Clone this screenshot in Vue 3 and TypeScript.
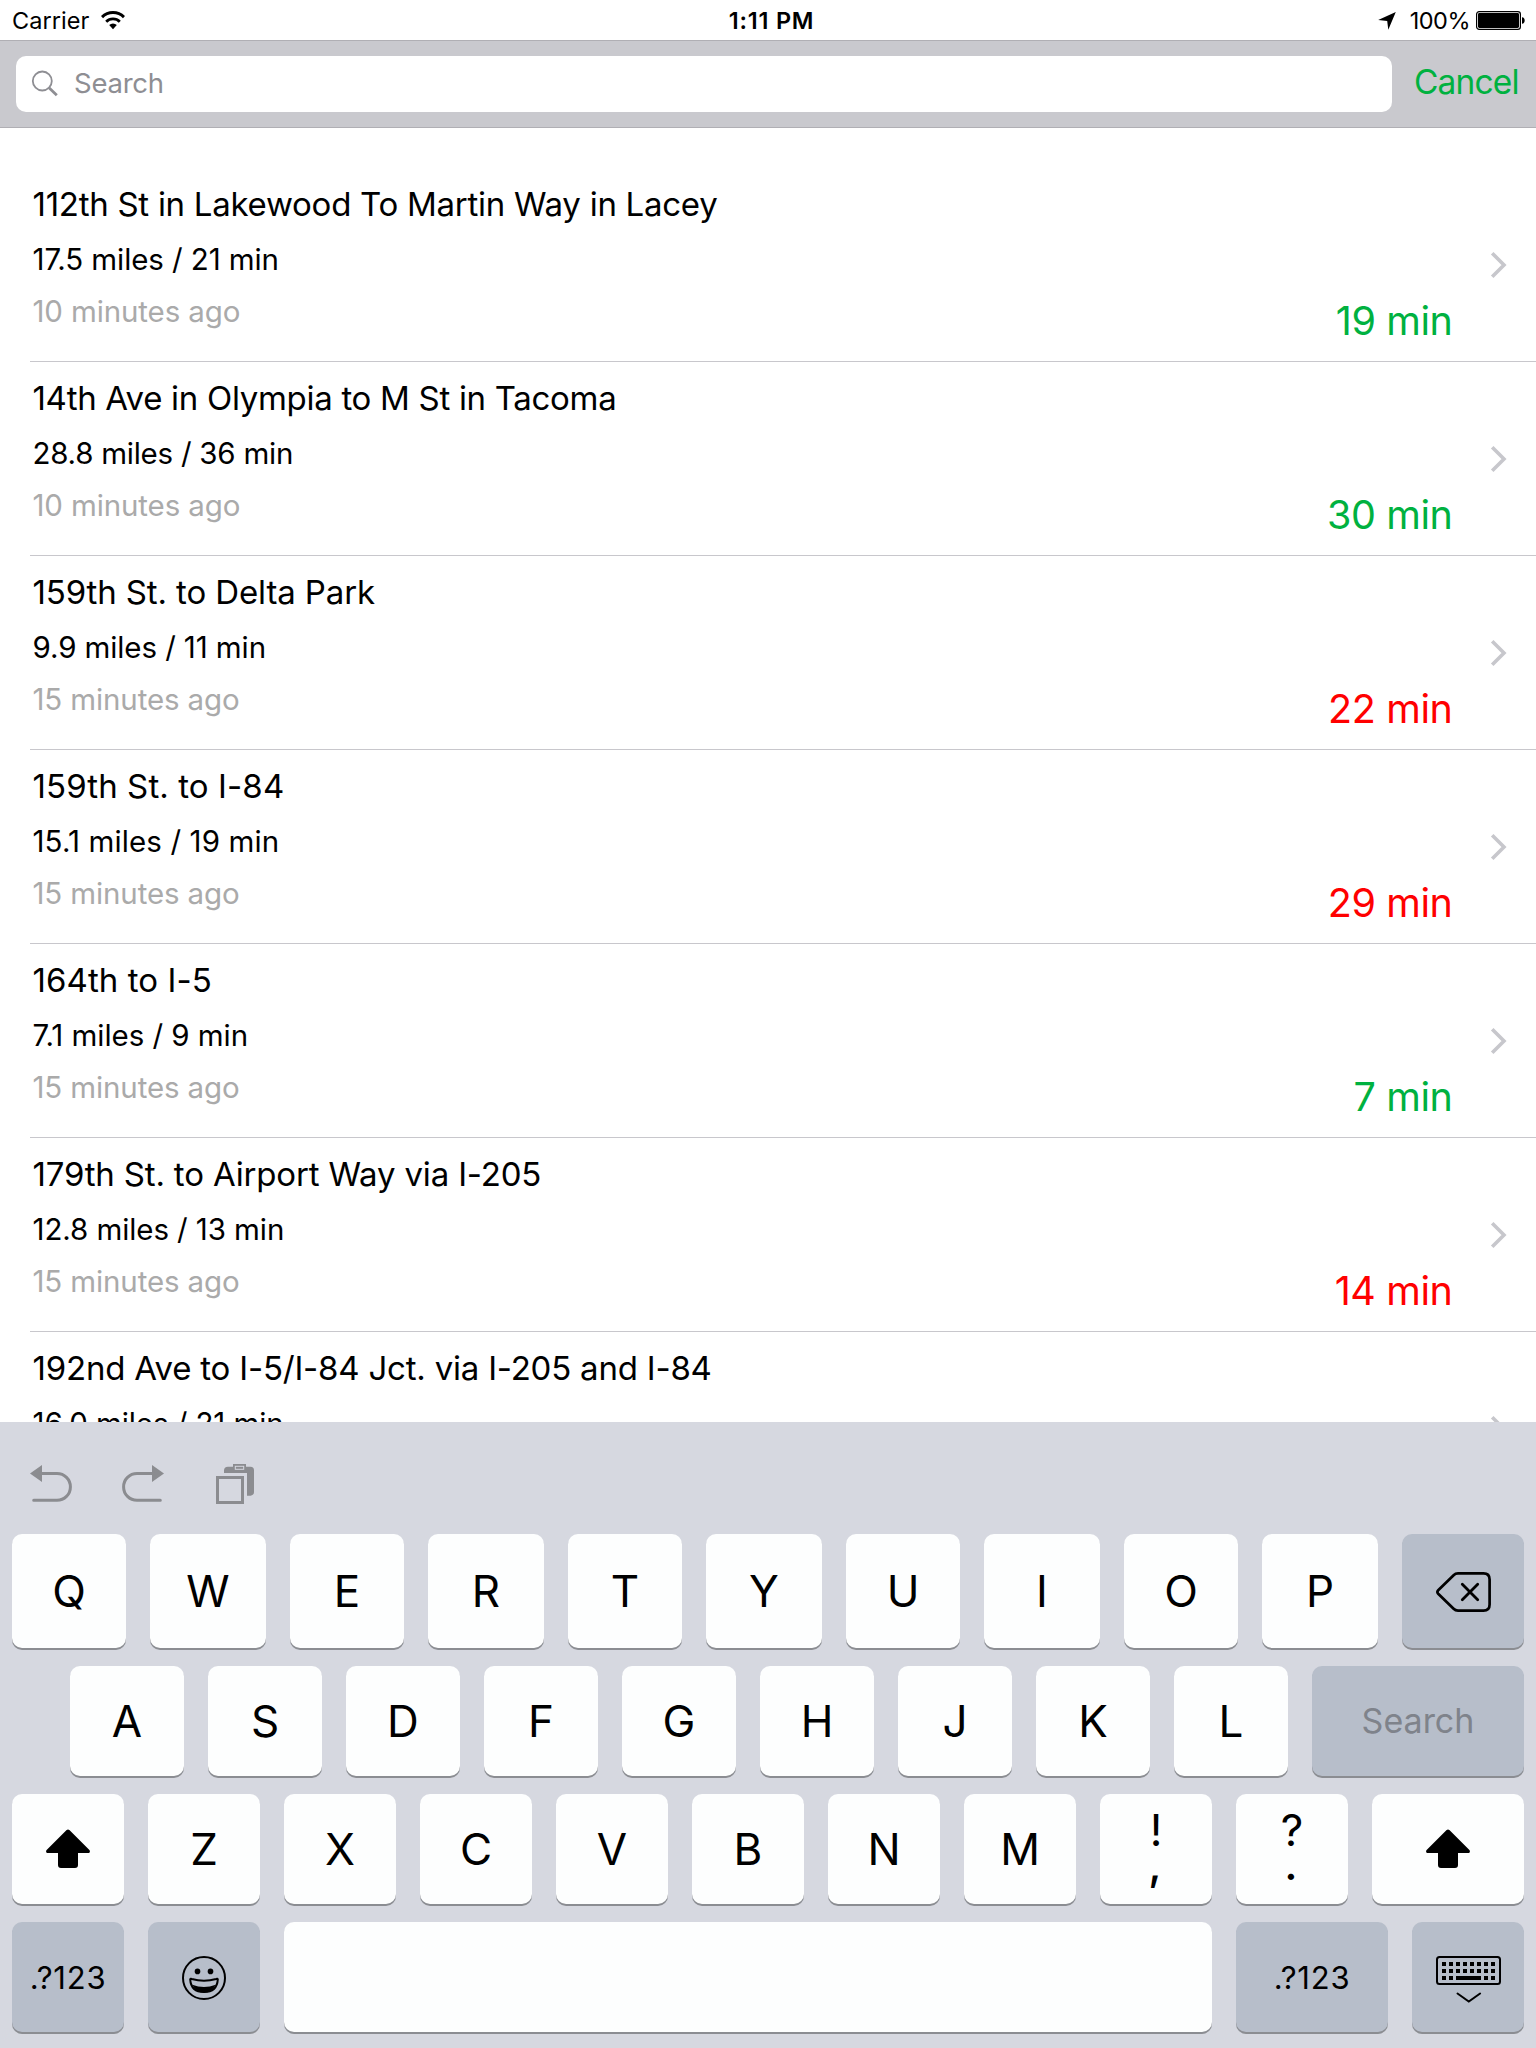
<script setup lang="ts">
interface Trip {
  name: string
  nameTracking: number
  detail: string
  detailTracking: number
  ago?: string
  time?: string
  slow?: boolean
}

interface Key {
  label?: string
  lower?: string
  icon?: 'delete' | 'shift' | 'emoji' | 'hide'
  kind?: 'letter' | 'small' | 'search'
  dark?: boolean
  width: number
}

const trips: Trip[] = [
  { name: '112th St in Lakewood To Martin Way in Lacey', nameTracking: -0.27, detail: '17.5 miles / 21 min', detailTracking: -0.09, ago: '10 minutes ago', time: '19 min' },
  { name: '14th Ave in Olympia to M St in Tacoma', nameTracking: -0.3, detail: '28.8 miles / 36 min', detailTracking: -0.25, ago: '10 minutes ago', time: '30 min' },
  { name: '159th St. to Delta Park', nameTracking: -0.12, detail: '9.9 miles / 11 min', detailTracking: -0.1, ago: '15 minutes ago', time: '22 min', slow: true },
  { name: '159th St. to I-84', nameTracking: 0.1, detail: '15.1 miles / 19 min', detailTracking: 0.12, ago: '15 minutes ago', time: '29 min', slow: true },
  { name: '164th to I-5', nameTracking: 0.07, detail: '7.1 miles / 9 min', detailTracking: -0.05, ago: '15 minutes ago', time: '7 min' },
  { name: '179th St. to Airport Way via I-205', nameTracking: -0.17, detail: '12.8 miles / 13 min', detailTracking: -0.09, ago: '15 minutes ago', time: '14 min', slow: true },
  { name: '192nd Ave to I-5/I-84 Jct. via I-205 and I-84', nameTracking: -0.21, detail: '16.0 miles / 21 min', detailTracking: -0.09 },
]

const letters = (text: string, width: (i: number) => number): Key[] =>
  text.split('').map((label, i) => ({ label, kind: 'letter', width: width(i) }))

const rows: Key[][] = [
  [...letters('QWERTYUIOP', (i) => (i % 2 ? 116 : 114)), { icon: 'delete', dark: true, width: 122 }],
  [...letters('ASDFGHJKL', () => 114), { label: 'Search', kind: 'search', dark: true, width: 212 }],
  [
    { icon: 'shift', width: 112 },
    ...letters('ZXCVBNM', () => 112),
    { label: '!', lower: ',', width: 112 },
    { label: '?', lower: '.', width: 112 },
    { icon: 'shift', width: 152 },
  ],
  [
    { label: '.?123', kind: 'small', dark: true, width: 112 },
    { icon: 'emoji', dark: true, width: 112 },
    { width: 928 },
    { label: '.?123', kind: 'small', dark: true, width: 152 },
    { icon: 'hide', dark: true, width: 112 },
  ],
]

const keyDots: { x: number; y: number; w: number }[] = []
for (let row = 0; row < 3; row++) {
  for (let col = 0; col < 8; col++) {
    if (row === 2 && col > 1 && col < 6) continue
    keyDots.push({ x: 6 + col * 7, y: 6 + row * 7, w: 4 })
  }
}
keyDots.push({ x: 20, y: 20, w: 25 })
</script>

<template>
  <div class="screen">
    <header class="status">
      <div class="side">
        <span class="carrier">Carrier</span>
        <svg class="wifi" width="24" height="19" viewBox="0 0 24 19">
          <path d="M1 6.1A15.6 15.6 0 0 1 23 6.1" fill="none" stroke="#000" stroke-width="3" />
          <path d="M5.2 10.7A9.7 9.7 0 0 1 18.8 10.7" fill="none" stroke="#000" stroke-width="2.8" />
          <path d="M8.2 14A5.4 5.4 0 0 1 15.8 14L12 18.2Z" />
        </svg>
      </div>
      <span class="clock">1:11 PM</span>
      <div class="side end">
        <svg class="arrow" width="18" height="18" viewBox="0 0 18 18"><path d="M17.8 0L10.3 17.8L9.2 9L0.2 7.9Z" /></svg>
        <span class="percent">100%</span>
        <svg width="50" height="19" viewBox="0 0 50 19">
          <rect x="0.6" y="0.6" width="43.8" height="17.8" rx="2.6" fill="none" stroke="#000" stroke-width="1.2" />
          <rect x="2" y="2" width="41" height="15" rx="1.4" />
          <path d="M46 6.2C49.6 6.2 49.6 12.8 46 12.8Z" />
        </svg>
      </div>
    </header>

    <div class="searchbar">
      <div class="field">
        <svg width="28" height="28" viewBox="0 0 28 28" fill="none" stroke="#8e8e93">
          <circle cx="11.3" cy="11" r="9.5" stroke-width="1.8" />
          <path d="M18 17.8L25.8 25.2" stroke-width="2.8" />
        </svg>
        <span class="placeholder">Search</span>
      </div>
      <span class="cancel">Cancel</span>
    </div>

    <main class="list">
      <article v-for="trip in trips" :key="trip.name" class="trip">
        <div class="info">
          <div class="name" :style="{ letterSpacing: trip.nameTracking + 'px' }">{{ trip.name }}</div>
          <div class="detail" :style="{ letterSpacing: trip.detailTracking + 'px' }">{{ trip.detail }}</div>
          <div v-if="trip.ago" class="ago">{{ trip.ago }}</div>
        </div>
        <div v-if="trip.time" class="time" :class="{ slow: trip.slow }">{{ trip.time }}</div>
        <svg class="chevron" width="18" height="28" viewBox="0 0 18 28">
          <path d="M2.2 2.2L14 14L2.2 25.8" fill="none" stroke="#c7c7cc" stroke-width="3.6" />
        </svg>
      </article>
    </main>

    <section class="keyboard">
      <div class="tools">
        <svg width="43" height="42" viewBox="0 0 43 42">
          <path d="M0 10.5L12 2V19Z" fill="#8b8c90" />
          <path d="M11 10.5H27A13.4 13.4 0 0 1 27 37.3H3.7" fill="none" stroke="#8b8c90" stroke-width="3" stroke-linecap="round" />
        </svg>
        <svg class="redo" width="42" height="42" viewBox="0 0 42 42">
          <path d="M42 10.5L30 2V19Z" fill="#8b8c90" />
          <path d="M31 10.5H15A13.4 13.4 0 0 0 15 37.3H38.3" fill="none" stroke="#8b8c90" stroke-width="3" stroke-linecap="round" />
        </svg>
        <svg class="paste" width="40" height="42" viewBox="0 0 40 42">
          <path d="M8 10V7A4 4 0 0 1 12 3.7H34.5A3.5 3.5 0 0 1 38 7.2V29A3.5 3.5 0 0 1 34.5 32.7H31V10Z" fill="#8b8c90" />
          <rect x="17" y="1" width="13" height="6.5" fill="#8b8c90" />
          <rect x="19.3" y="3.3" width="8.4" height="3" fill="none" stroke="#d6d8e0" stroke-width="1" />
          <rect x="1.5" y="14.5" width="25" height="25" fill="none" stroke="#8b8c90" stroke-width="3" />
        </svg>
      </div>

      <div v-for="(row, r) in rows" :key="r" class="keys" :class="{ tall: r === 0, inset: r === 1 }">
        <div v-for="(key, k) in row" :key="k" class="key" :class="[key.kind, { dark: key.dark, dual: key.lower }]" :style="{ width: key.width + 'px' }">
          <span v-if="key.label">{{ key.label }}</span>
          <span v-if="key.lower" class="lower">{{ key.lower }}</span>

          <svg v-if="key.icon === 'delete'" class="del" width="56" height="40" viewBox="0 0 56 40" fill="none" stroke="#000" stroke-linecap="round">
            <path d="M2.2 18.3L17.6 3.2Q19.4 1.4 22 1.4H47.5Q53.6 1.4 53.6 7.5V32.5Q53.6 38.6 47.5 38.6H22Q19.4 38.6 17.6 36.8L2.2 21.7Q0.6 20 2.2 18.3Z" stroke-width="2.7" />
            <path d="M26.3 12.3L41.7 27.7M41.7 12.3L26.3 27.7" stroke-width="2.8" />
          </svg>
          <svg v-else-if="key.icon === 'shift'" width="44" height="40" viewBox="0 0 44 40">
            <path d="M20.6 1Q22 -0.2 23.4 1L43.4 21Q44.6 22.4 43.2 24H32V36Q32 39 29 39H15Q12 39 12 36V24H0.8Q-0.6 22.4 0.6 21Z" />
          </svg>
          <svg v-else-if="key.icon === 'emoji'" class="emoji" width="44" height="44" viewBox="0 0 44 44">
            <circle cx="22" cy="22" r="21" fill="none" stroke="#000" stroke-width="2" />
            <circle cx="15.5" cy="15.4" r="2.8" />
            <circle cx="28.5" cy="15.4" r="2.8" />
            <path d="M8.2 23.4Q8.4 22.4 9.8 23Q22 26.4 34.2 23Q35.6 22.4 35.8 23.4Q35 36 22 36Q9 36 8.2 23.4Z" fill="none" stroke="#000" stroke-width="2" />
            <path d="M10.3 28.7Q22 33.4 33.7 28.7Q30 36.6 22 36.6Q14 36.6 10.3 28.7Z" />
          </svg>
          <svg v-else-if="key.icon === 'hide'" class="hide" width="65" height="48" viewBox="0 0 65 48">
            <rect x="1" y="1" width="63" height="27" rx="2.5" fill="none" stroke="#000" stroke-width="2" />
            <rect v-for="dot in keyDots" :key="`${dot.x}-${dot.y}`" :x="dot.x" :y="dot.y" :width="dot.w" height="4" />
            <path d="M21.5 37.5L32.8 45.5L44.1 37.5" fill="none" stroke="#000" stroke-width="2" stroke-linecap="round" />
          </svg>
        </div>
      </div>
    </section>
  </div>
</template>

<style>
body {
  margin: 0;
}
</style>

<style scoped>
.screen {
  display: flex;
  flex-direction: column;
  width: 1536px;
  height: 2048px;
  overflow: hidden;
  background: #fff;
  color: #000;
  font-family: Inter, 'Liberation Sans', sans-serif;
  white-space: nowrap;
}

.status {
  display: flex;
  align-items: flex-start;
  flex: none;
  box-sizing: border-box;
  height: 40px;
  padding: 0 10px 0 12px;
  font-size: 23.5px;
  line-height: 41px;
}

.side {
  display: flex;
  flex: 1;
}

.end {
  justify-content: flex-end;
}

.side svg {
  margin-top: 11px;
}

.carrier {
  letter-spacing: 0.05px;
}

.wifi {
  margin-left: 12px;
}

.clock {
  padding-left: 5px;
  font-weight: 600;
  letter-spacing: 0.8px;
}

.side .arrow {
  margin: 12px 14px 0 0;
}

.percent {
  margin-right: 6px;
  letter-spacing: -0.5px;
}

.searchbar {
  display: flex;
  flex: none;
  box-sizing: border-box;
  height: 88px;
  padding: 15px 0 0 16px;
  border-top: 1px solid #b0afb4;
  border-bottom: 1px solid #b0afb4;
  background: #c9c9ce;
}

.field {
  display: flex;
  box-sizing: border-box;
  width: 1376px;
  height: 56px;
  padding: 14px 0 0 15px;
  border-radius: 10px;
  background: #fff;
}

.placeholder {
  margin: -14px 0 0 15px;
  color: #8e8e93;
  font-size: 27.5px;
  letter-spacing: -0.25px;
  line-height: 55px;
}

.cancel {
  margin-left: 22px;
  color: #00b140;
  font-size: 33.5px;
  letter-spacing: -0.85px;
  line-height: 53px;
}

.list {
  flex: none;
  box-sizing: border-box;
  height: 1294px;
  padding-top: 40px;
  overflow: hidden;
}

.trip {
  display: flex;
  box-sizing: border-box;
  height: 194px;
  margin-left: 30px;
  border-bottom: 1px solid #c8c7cc;
}

.info {
  flex: 1;
  padding: 12px 0 0 2.5px;
}

.name {
  font-size: 33px;
  line-height: 48px;
}

.detail {
  margin-top: 4px;
  font-size: 29.5px;
  line-height: 55px;
}

.ago {
  color: #aaa;
  font-size: 29.5px;
  letter-spacing: -0.13px;
  line-height: 49px;
}

.time {
  align-self: flex-end;
  margin-bottom: 15px;
  color: #00b140;
  font-size: 39.5px;
  letter-spacing: -0.4px;
  line-height: 50px;
}

.slow {
  color: #f00;
}

.chevron {
  margin: 83px 28.5px 0 37px;
}

.keyboard {
  flex: 1;
  background: #d6d8e0;
}

.tools {
  display: flex;
  height: 71px;
  padding: 41px 0 0 30px;
}

.redo {
  margin-left: 49px;
}

.paste {
  margin-left: 52px;
}

.keys {
  display: flex;
  gap: 24px;
  height: 110px;
  padding-left: 12px;
  margin-bottom: 18px;
}

.tall {
  height: 114px;
}

.inset {
  padding-left: 70px;
}

.key {
  display: flex;
  align-items: center;
  justify-content: center;
  flex: none;
  border-radius: 10px;
  background: #fdfefe;
  box-shadow: 0 2px 0 #8b8d92;
  font-size: 44px;
}

.dark {
  background: #b7beca;
}

.small {
  font-size: 31px;
  letter-spacing: 0.8px;
}

.search {
  color: #7f838b;
  font-size: 34px;
}

.search span {
  margin-top: -2px;
}

.dual {
  flex-direction: column;
  justify-content: flex-start;
}

.dual span {
  height: 33px;
  padding-top: 5px;
  line-height: 62px;
}

.dual .lower {
  height: 28px;
  padding: 0 2px 0 0;
  font-weight: 500;
  line-height: 65px;
}

.del {
  margin: 2px 0 0 2px;
}

.emoji {
  margin-top: 2px;
}

.hide {
  margin-top: 6px;
}
</style>
